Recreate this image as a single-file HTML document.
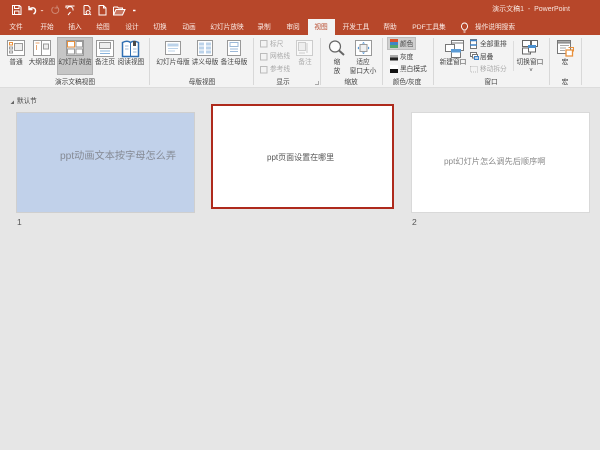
<!DOCTYPE html>
<html><head><meta charset="utf-8">
<style>
html,body{margin:0;padding:0;width:600px;height:450px;overflow:hidden;background:#e6e6e6}
body{position:relative;font-family:"Liberation Sans","Noto Sans CJK SC",sans-serif}
.a,.t,.l,.c,.g,svg{position:absolute}
.t{color:#fbeee9;font-size:6.7px;line-height:10px;top:22px;margin-top:1px;white-space:nowrap;transform:translateX(-50%)}
.l{color:#444;font-size:6.7px;line-height:10px;margin-top:1px;white-space:nowrap;transform:translateX(-50%);text-align:center}
.c{color:#444;font-size:6.7px;line-height:10px;margin-top:1px;white-space:nowrap}
.g{color:#444;font-size:6.7px;line-height:10px;top:77px;margin-top:1px;white-space:nowrap;transform:translateX(-50%)}
.d{color:#aaa}
.sep{position:absolute;top:38px;width:1px;height:47px;background:#d8d8d8}
</style></head><body>
<div class="a" style="left:0;top:0;width:600px;height:35px;background:#b7472a"></div>
<div class="a" style="left:0;top:35px;width:600px;height:52px;background:#f3f3f3"></div>
<div class="a" style="left:0;top:87px;width:600px;height:1px;background:#dcdcdc"></div>

<!-- QAT -->
<svg style="left:11px;top:4px" width="130" height="13" viewBox="0 0 130 13" fill="none" stroke="#fff" stroke-width="1">
<path d="M1.500 1.500h7l1.500 1.500v7.500h-8.500z M3.500 1.500v3h4.500v-3 M3.500 10.500v-3.500h4.500v3.500"/>
<path d="M18 2v3.500h3.500 M18.500 5c2-2 5.500-1.500 6 1.200 .2 1.500-.5 3-2 3.800" stroke-width="1.400"/>
<path d="M29.500 6h3l-1.500 1.500z" fill="#f3cfc4" stroke="none"/>
<path d="M46 3a3.500 3.500 0 1 1-3.500 0 M46 1.500v2.500h-2.500" stroke="#cf8a76"/>
<path d="M54.500 2h9 M55 2v2 M56 5a3 3 0 1 1 6 1.500 M59.500 8l-2.500 3"/>
<path d="M73 1.500h4l2 2v2.500 M73 1.500v9h3 M77 6.500a2 2 0 1 0 .1 0 M78.500 9.500l1.500 1.500"/>
<path d="M88 1.500h4.500l2.500 2.500v7h-7z M92.500 1.500v2.500h2.500"/>
<path d="M102.500 3h4l1 1h4v1.500 M102.500 3v8h9l2.500-5.500h-9l-2.500 5.500" fill="#fff" fill-opacity=".25"/>
<path d="M122 6.500h2.500" stroke-width="1.500"/>
</svg>
<div class="a" style="left:531px;top:5px;transform:translateX(-50%);color:#f8e6df;font-size:7px;line-height:10px;white-space:nowrap">演示文稿1&nbsp; -&nbsp; PowerPoint</div>

<!-- Tabs -->
<div class="a" style="left:308px;top:19px;width:27px;height:17px;background:#f3f3f3"></div>
<div class="t" style="left:16px">文件</div>
<div class="t" style="left:47px">开始</div>
<div class="t" style="left:75px">插入</div>
<div class="t" style="left:103px">绘图</div>
<div class="t" style="left:132px">设计</div>
<div class="t" style="left:160px">切换</div>
<div class="t" style="left:189px">动画</div>
<div class="t" style="left:227px">幻灯片放映</div>
<div class="t" style="left:264px">录制</div>
<div class="t" style="left:293px">审阅</div>
<div class="t" style="left:321px;color:#b7472a">视图</div>
<div class="t" style="left:356px">开发工具</div>
<div class="t" style="left:390px">帮助</div>
<div class="t" style="left:429px">PDF工具集</div>
<svg style="left:460px;top:22px" width="10" height="12" fill="none" stroke="#fff" stroke-width=".9"><path d="M3 7.500C0 4.500 2 1 4.500 1S9 4.500 6 7.500L5.500 8h-2z M3.500 10h2"/></svg>
<div class="t" style="left:495px">操作说明搜索</div>

<!-- Selected view button -->
<div class="a" style="left:57px;top:37px;width:36px;height:38px;background:#c6c6c6;border:1px solid #b0b0b0;box-sizing:border-box"></div>
<div class="a" style="left:387px;top:37px;width:29px;height:13px;background:#d0d0d0;border:1px solid #bdbdbd;box-sizing:border-box"></div>

<!-- Icons -->
<svg style="left:0;top:35px" width="600" height="40" viewBox="0 0 600 40" fill="none" stroke="#999" stroke-width="1">
<!-- normal -->
<rect x="7.500" y="5.500" width="17" height="15" fill="#fff"/><rect x="9.500" y="7.500" width="3" height="2.500" stroke="#e8903c"/><rect x="9.500" y="12" width="3" height="2" /><rect x="9.500" y="16" width="3" height="2"/><rect x="14.500" y="8.500" width="8" height="7" fill="#eee"/>
<!-- outline -->
<rect x="33.500" y="5.500" width="17" height="15" fill="#fff"/><path d="M41.500 5.500v15"/><path d="M35.500 8h4 M36.500 10v5" stroke="#e8a36c"/><rect x="43.500" y="9" width="5" height="5" fill="#eee"/>
<!-- sorter -->
<rect x="66.500" y="5.500" width="17" height="15" fill="#e8e8e8"/><rect x="67.500" y="6.500" width="7" height="5.500" fill="#fff" stroke="#e8903c"/><rect x="76" y="6.500" width="6.500" height="5.500" fill="#fff"/><rect x="67.500" y="14" width="7" height="5" fill="#fff"/><rect x="76" y="14" width="6.500" height="5" fill="#fff"/>
<!-- notes -->
<rect x="96.500" y="5.500" width="17" height="16" fill="#fff"/><rect x="99.500" y="7.500" width="11" height="6" fill="#eee"/><path d="M100 16h10 M100 18.500h10" stroke="#8ab4dd"/>
<!-- read -->
<path d="M122.500 7.500c3-1.500 6-1.500 8 0 2-1.500 5-1.500 8 0v14h-16z" fill="#fff" stroke="#2f6fb3" stroke-width="1.500"/><path d="M130.500 7.500v14" stroke="#2f6fb3"/><path d="M125 11h3.500 M125 14h3.500 M133 14h3.500 M133 17h3.500" stroke="#9db9d8"/><rect x="133" y="6" width="3" height="5" fill="#4a4a4a" stroke="none"/>
<!-- slide master -->
<rect x="165.500" y="6.500" width="15" height="13" fill="#fff"/><rect x="167.500" y="8.500" width="11" height="3" fill="#bcd3ea" stroke="none"/><path d="M168 13.500h10 M168 16h7" stroke="#bcd3ea"/>
<!-- handout -->
<rect x="197.500" y="5.500" width="15" height="15" fill="#fff"/><rect x="199" y="7.500" width="5" height="3" fill="#bcd3ea" stroke="none"/><rect x="206" y="7.500" width="5" height="3" fill="#bcd3ea" stroke="none"/><rect x="199" y="11.500" width="5" height="3" fill="#bcd3ea" stroke="none"/><rect x="206" y="11.500" width="5" height="3" fill="#bcd3ea" stroke="none"/><rect x="199" y="15.500" width="5" height="3" fill="#bcd3ea" stroke="none"/><rect x="206" y="15.500" width="5" height="3" fill="#bcd3ea" stroke="none"/>
<!-- notes master -->
<rect x="227.500" y="5.500" width="13" height="15" fill="#fff"/><rect x="230" y="7.500" width="8" height="4" fill="#fff" stroke="#9db9d8"/><path d="M230 14h8 M230 16.500h8" stroke="#9db9d8"/>
<!-- checkboxes -->
<g stroke="#bbb" fill="#f3f3f3"><rect x="260.500" y="5.500" width="6.500" height="6.500"/><rect x="260.500" y="18.500" width="6.500" height="6.500"/><rect x="260.500" y="31.500" width="6.500" height="6.500"/></g>
<!-- notes disabled -->
<rect x="296.500" y="5.500" width="16" height="15" fill="#f8f8f8" stroke="#ccc"/><rect x="298.500" y="7.500" width="7" height="8" fill="#eee" stroke="#ccc"/><path d="M307 8v10 M299 18h6" stroke="#ccc"/>
<!-- zoom -->
<circle cx="335" cy="11.500" r="5.500" fill="#fdfdfd" stroke="#666" stroke-width="1.200"/><path d="M339 15.500l5 4.500" stroke="#666" stroke-width="2"/>
<!-- fit -->
<rect x="355.500" y="5.500" width="16" height="15" fill="#fff"/><rect x="360" y="9.500" width="7" height="7" fill="#f0f0f0"/><path d="M363.500 7l-1.500 1.500h3z M363.500 19l-1.500-1.500h3z M357.500 13l1.500-1.500v3z M369.500 13l-1.500-1.500v3z" fill="#3d86cc" stroke="none"/>
<!-- colors -->
<rect x="390" y="4" width="8" height="3" fill="#d9552e" stroke="none"/><rect x="390" y="7" width="8" height="3" fill="#3e86c4" stroke="none"/><rect x="390" y="10" width="8" height="3" fill="#53a66b" stroke="none"/>
<rect x="390" y="17" width="8" height="3" fill="#f4f4f4" stroke="none"/><rect x="390" y="20" width="8" height="2.500" fill="#aaa" stroke="none"/><rect x="390" y="22.500" width="8" height="3" fill="#222" stroke="none"/>
<rect x="390" y="30" width="8" height="4" fill="#fff" stroke="none"/><rect x="390" y="34" width="8" height="4" fill="#111" stroke="none"/>
<!-- new window -->
<rect x="451.500" y="5.500" width="12" height="10" fill="#fff" stroke="#777"/><path d="M451.500 8h12" stroke="#777"/><rect x="445.500" y="9.500" width="9" height="7" fill="#fff" stroke="#777"/><rect x="451.500" y="14.500" width="9" height="8" fill="#fff" stroke="#777"/><rect x="451.500" y="14.500" width="9" height="2.500" fill="#5b9bd5" stroke="#5b9bd5"/>
<!-- arrange all -->
<rect x="470.500" y="4.500" width="6" height="9" fill="#fff" stroke="#777"/><path d="M470 5.500h7 M470 10h7" stroke="#3d80c4" stroke-width="1.500"/>
<rect x="470.500" y="17.500" width="6" height="4" fill="#fff" stroke="#777"/><rect x="472.500" y="19.500" width="5" height="3.500" fill="#fff" stroke="#777"/><rect x="474.500" y="21.500" width="4" height="3" fill="#bcd3ea" stroke="#3d80c4"/>
<rect x="470.500" y="31.500" width="7" height="5.500" fill="#f3f3f3" stroke="#bbb" stroke-dasharray="1 1"/>
<!-- switch window -->
<rect x="522.500" y="5.500" width="8" height="6" fill="#fff" stroke="#666"/><rect x="531.500" y="5.500" width="6" height="6" fill="#fff" stroke="#666"/><rect x="522.500" y="13" width="8" height="6" fill="#fff" stroke="#666"/><rect x="528.500" y="10.500" width="7" height="6.500" fill="#fff" stroke="#666"/><rect x="528.500" y="10.500" width="7" height="2" fill="#4a90d0" stroke="#4a90d0"/>
<!-- macro -->
<rect x="557.500" y="5.500" width="13" height="13" fill="#fff" stroke="#777"/><rect x="557.500" y="5.500" width="13" height="2.500" fill="#aaa" stroke="#777"/><path d="M560 10.500h9 M560 13h6 M560 15.500h5" stroke="#aaa"/><path d="M566 15h6.500v6h-6.500z" fill="#fff" stroke="#e88f3a" stroke-width="1.300"/><path d="M568.500 12.500h5v4" stroke="#e88f3a"/>
</svg>

<!-- Labels row 1 -->
<div class="l" style="left:16px;top:57px">普通</div>
<div class="l" style="left:42px;top:57px">大纲视图</div>
<div class="l" style="left:75px;top:57px">幻灯片浏览</div>
<div class="l" style="left:105px;top:57px">备注页</div>
<div class="l" style="left:131px;top:57px">阅读视图</div>
<div class="l" style="left:173px;top:57px">幻灯片母版</div>
<div class="l" style="left:205px;top:57px">讲义母版</div>
<div class="l" style="left:234px;top:57px">备注母版</div>
<div class="c d" style="left:270px;top:39px">标尺</div>
<div class="c d" style="left:270px;top:51px">网格线</div>
<div class="c d" style="left:270px;top:64px">参考线</div>
<div class="l d" style="left:305px;top:57px">备注</div>
<div class="l" style="left:337px;top:57px">缩</div>
<div class="l" style="left:337px;top:66px">放</div>
<div class="l" style="left:363px;top:57px">适应</div>
<div class="l" style="left:363px;top:66px">窗口大小</div>
<div class="c" style="left:400px;top:39px">颜色</div>
<div class="c" style="left:400px;top:52px">灰度</div>
<div class="c" style="left:400px;top:64px">黑白模式</div>
<div class="l" style="left:453px;top:57px">新建窗口</div>
<div class="c" style="left:480px;top:39px">全部重排</div>
<div class="c" style="left:480px;top:52px">层叠</div>
<div class="c d" style="left:480px;top:64px">移动拆分</div>
<div class="l" style="left:530px;top:57px">切换窗口</div>
<div class="l" style="left:531px;top:65px;font-size:6px">˅</div>
<div class="l" style="left:565px;top:57px">宏</div>

<!-- Group labels -->
<div class="g" style="left:75px">演示文稿视图</div>
<div class="g" style="left:202px">母版视图</div>
<div class="g" style="left:283px">显示</div>
<div class="g" style="left:351px">缩放</div>
<div class="g" style="left:407px">颜色/灰度</div>
<div class="g" style="left:491px">窗口</div>
<div class="g" style="left:565px">宏</div>
<div class="a" style="left:315px;top:81px;width:3px;height:3px;border-right:1px solid #aaa;border-bottom:1px solid #aaa"></div>

<!-- Separators -->
<div class="sep" style="left:149px"></div>
<div class="sep" style="left:253px"></div>
<div class="sep" style="left:320px"></div>
<div class="sep" style="left:382px"></div>
<div class="sep" style="left:433px"></div>
<div class="sep" style="left:549px"></div>
<div class="sep" style="left:581px"></div>
<div class="a" style="left:513px;top:41px;width:1px;height:30px;background:#ddd"></div>

<!-- Section -->
<svg style="left:10px;top:100px" width="5" height="5"><path d="M4 0.500V4H0.500z" fill="#666"/></svg>
<div class="a" style="left:17px;top:97px;font-size:6.600px;line-height:10px;color:#444">默认节</div>

<!-- Slides -->
<div class="a" style="left:16px;top:112px;width:179px;height:101px;box-sizing:border-box;background:#c1d1ea;border:1px solid #cfcfcf"></div>
<div class="a" style="left:60px;top:150px;font-size:10.200px;line-height:14px;color:#858a94;white-space:nowrap">ppt动画文本按字母怎么弄</div>
<div class="a" style="left:17px;top:217px;font-size:8.500px;line-height:10px;color:#555">1</div>

<div class="a" style="left:211px;top:104px;width:183px;height:105px;box-sizing:border-box;background:#fff;border:2.500px solid #ae2a1c"></div>
<div class="a" style="left:267px;top:152px;font-size:8px;line-height:12px;color:#555;white-space:nowrap">ppt页面设置在哪里</div>

<div class="a" style="left:411px;top:112px;width:179px;height:101px;box-sizing:border-box;background:#fff;border:1px solid #d9d9d9"></div>
<div class="a" style="left:444px;top:156px;font-size:8.200px;line-height:12px;color:#8a8a8a;white-space:nowrap">ppt幻灯片怎么调先后顺序啊</div>
<div class="a" style="left:412px;top:217px;font-size:8.500px;line-height:10px;color:#555">2</div>
</body></html>
